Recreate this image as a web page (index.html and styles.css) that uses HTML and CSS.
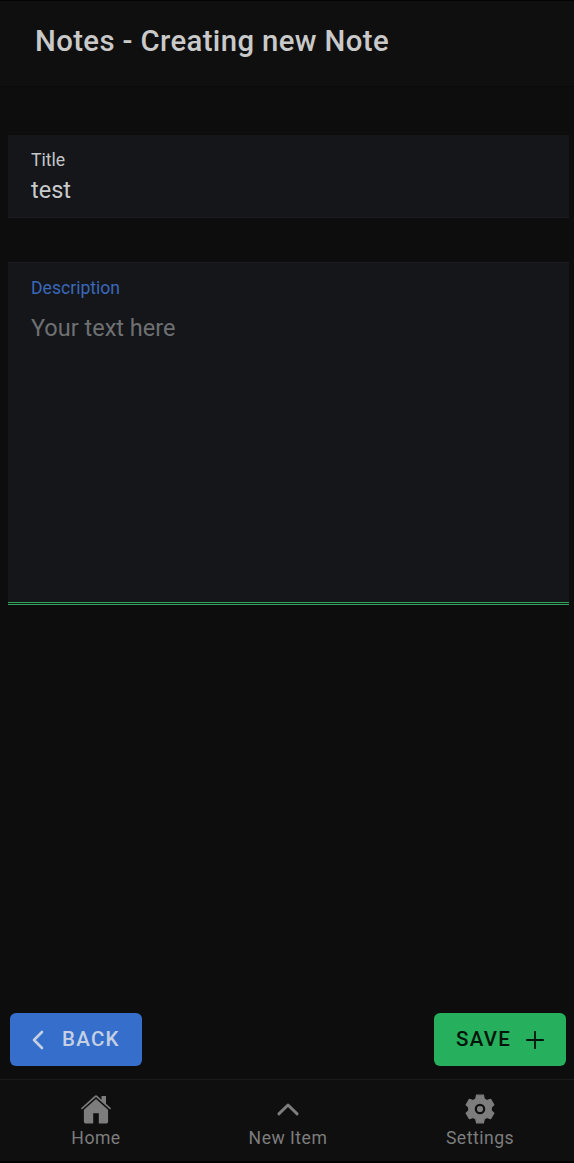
FILE: index.html
```html
<!DOCTYPE html>
<html lang="en">
<head>
<meta charset="utf-8">
<title>Notes - Creating new Note</title>
<link rel="stylesheet" href="styles.css">
</head>
<body>
<div class="app">
  <header class="header"><h1 class="header-title">Notes - Creating new Note</h1></header>
  <main class="content">
    <section class="field field-title">
      <div class="label">Title</div>
      <div class="value">test</div>
    </section>
    <section class="field field-description">
      <div class="label label-active">Description</div>
      <div class="value placeholder">Your text here</div>
    </section>
  </main>
  <div class="actions">
    <button class="button button-back">
      <svg class="icon-back" width="12" height="20" viewBox="0 0 12 20"><path d="M10 2 2 10l8 8" fill="none" stroke="currentColor" stroke-width="2.6" stroke-linecap="round" stroke-linejoin="round"/></svg>
      <span>BACK</span>
    </button>
    <button class="button button-save">
      <span>SAVE</span>
      <svg class="icon-add" width="18" height="18" viewBox="0 0 18 18"><path d="M9 .8v16.400M.8 9h16.400" fill="none" stroke="currentColor" stroke-width="1.8" stroke-linecap="round"/></svg>
    </button>
  </div>
  <nav class="tabs">
    <a class="tab">
      <svg width="32" height="32" viewBox="0 0 32 32"><path d="M16 5.900 3.900 16.800V28.800q0 1.600 1.600 1.600H13.200V20.200h5.600v10.200h7.700q1.600 0 1.600-1.600V16.800z" fill="currentColor"/><path d="M26 10.800V3h-4.500v3.700L17.200 2.700q-1.200-1-2.400 0L1.300 14.900q-.5.600 0 1.100t1.200.1L16 4l13.500 12.100q.7.400 1.200-.1t0-1.100z" fill="currentColor"/></svg>
      <span>Home</span>
    </a>
    <a class="tab">
      <svg width="32" height="32" viewBox="0 0 32 32"><path d="m6.900 20.900 9.100-8.900 9.100 8.900" fill="none" stroke="currentColor" stroke-width="2.900" stroke-linecap="round" stroke-linejoin="round"/></svg>
      <span>New Item</span>
    </a>
    <a class="tab">
      <svg width="32" height="32" viewBox="0 0 32 32"><path d="M12.600 2.200h6.800l.8 3.800 2.700 1.500 3.700-1.200 3.200 5.500-2.600 2.600v3.200l2.600 2.600-3.200 5.500-3.700-1.200-2.700 1.500-.8 3.800h-6.800l-.8-3.800-2.700-1.500-3.700 1.200-3.200-5.500 2.600-2.600v-3.200l-2.600-2.600 3.200-5.500 3.700 1.200L11.800 6z" fill="currentColor" stroke="currentColor" stroke-width="1.300" stroke-linejoin="round"/><circle class="gear-ring" cx="16" cy="16" r="4.200"/></svg>
      <span>Settings</span>
    </a>
  </nav>
</div>
</body>
</html>
```

FILE: styles.css
```css
* { box-sizing: border-box; }
body { margin: 0; background: #0d0d0d; font-family: Roboto, sans-serif; overflow: hidden; }
.app {
  height: 1163px;
  display: flex;
  flex-direction: column;
  border-top: 1px solid #040404;
  border-bottom: 2px solid #020202;
}
.header {
  height: 86px;
  padding: 21px 35px 0;
  background: #0f0f0f;
  border-bottom: 1px solid #0b0b0b;
}
.header-title {
  margin: 0;
  font-size: 29.3px;
  line-height: 38px;
  font-weight: 500;
  letter-spacing: 0.38px;
  color: #c9c9c9;
  white-space: nowrap;
}
.content { flex: 1; padding: 48px 5px 0 8px; }
.field { padding: 0 23px; background: #14161a; }
.field-title { height: 83px; padding-top: 14px; margin-bottom: 44px; border-bottom: 1px solid #191b1e; }
.field-description {
  height: 343px;
  padding-top: 14px;
  border-top: 1px solid #1a1c1e;
  border-bottom: 3px double #2fa55b;
}
.label { font-size: 17.6px; line-height: 22px; color: #c4c5c7; }
.label-active { color: #3a68ba; }
.value { margin-top: 4px; font-size: 23.5px; line-height: 30px; color: #c9cacc; }
.placeholder { margin-top: 14px; color: #6f7072; }
.actions { display: flex; justify-content: space-between; padding: 0 8px 13px 10px; }
.button {
  display: flex;
  align-items: center;
  height: 53px;
  padding: 0 22px;
  border: 0;
  border-radius: 6px;
  font: 500 20.5px/24px Roboto, sans-serif;
  letter-spacing: 1.25px;
}
.button span { padding-bottom: 2px; }
.button-back { width: 132px; gap: 18px; background: #356ecb; color: #c6d0e3; }
.button-save { width: 132px; gap: 15px; background: #26b05d; color: #04140a; }
.button svg { flex: none; }
.tabs { height: 82px; display: flex; border-top: 1px solid #1b1b1b; background: #0f0f0f; }
.tab {
  flex: 0 0 192px;
  display: flex;
  flex-direction: column;
  align-items: center;
  padding-top: 13px;
  font-size: 17.6px;
  line-height: 22px;
  letter-spacing: 0.5px;
  color: #7d7d7d;
}
.tab span { margin-top: 2px; }
.gear-ring { fill: #7d7d7d; stroke: #0f0f0f; stroke-width: 2.2; }
```
